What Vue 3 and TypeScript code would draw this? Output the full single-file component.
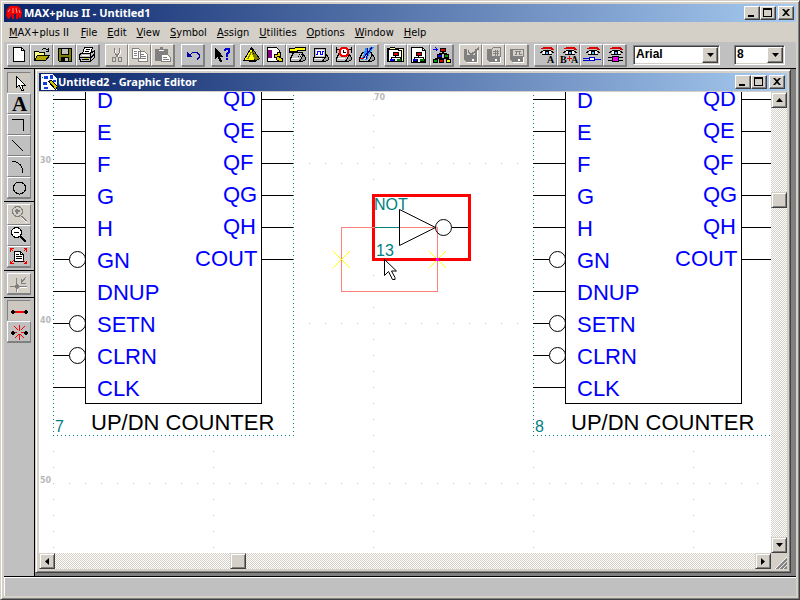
<script setup lang="ts">
import { ref } from 'vue'

type Shape = [fill: string, stroke: string, d: string]
interface Tool { id: string; label: string; disabled?: boolean }
interface Pin { name: string; y: number; inverted?: boolean }

const N = 'none'
const K = '#000'
const G = '#808080'
const W = '#fff'

const scanner: Shape[] = [
  ['#c0c0c0', K, 'M3.500 13.500l3-6h9v4l-3 5h-9v-3z'],
  ['#a0a0a0', K, 'M12.500 16.500l3-5v-3l3 4v2l-3 2z'],
  [N, W, 'M5 13.500h7'],
]

const eye: Shape[] = [
  [N, '#e00000', 'M8 2.500h9M6 3.500h12M16 4.500h3'],
  [N, K, 'M8 5.500h8M6 6.500h3M15 6.500h3M5 7.500h2M17 7.500h2M7 9.500h3M14 9.500h3'],
  [W, N, 'M8 6h8v3H8z'],
  ['#2060c0', K, 'M10.500 6.500h3v3h-3z'],
  ['#60b0ff', N, 'M11 7h2v2h-2z'],
]

const tree: Shape[] = [
  [K, N, 'M8 7h6v4H8zM10 11h1v2h-1zM6 12h10v1H6zM6 13h1v1H6zM15 13h1v1h-1zM5 14h5v3H5zM12 14h5v3h-5z'],
  ['#e00000', N, 'M9 8h4v2H9z'],
  ['#0000e0', N, 'M5 14h4v2H5z'],
  ['#008000', N, 'M12 14h4v2h-4z'],
]

const disk: Shape[] = [
  [G, G, 'M4.500 4.500h12v12h-10l-2-2z'],
  [W, N, 'M12 14h2v2h-2zM17 6h1v12H7v-1h10z'],
]

const icons: Record<string, Shape[]> = {
  new: [[W, K, 'M5.500 2.500h8l3 3v11h-11z'], [N, K, 'M13.500 2.500v3h3']],
  open: [
    ['#ffff80', K, 'M3.500 15.500v-9h4l1 1h5v3'],
    ['#b0a800', K, 'M3.500 15.500l3-5h12l-4 5z'],
    [N, K, 'M11 4.500h1M12 3.500h3M15 4.500h2M17.500 3v4M15 6.500h3'],
  ],
  save: [
    ['#808000', K, 'M4.500 3.500h13v13h-12l-1-1z'],
    ['#c0c0c0', K, 'M7.500 3.500h7v6h-7z'],
    ['#c0c0c0', K, 'M7.500 12.500h7v4h-7z'],
    [K, N, 'M8 13h3v3H8z'],
  ],
  print: [
    [W, K, 'M5.500 8.500l2-6h8l-2 6'],
    [N, K, 'M9 4.500h4M8 6.500h4'],
    ['#c0c0c0', K, 'M2.500 12.500v-3l2-1h9l4-3v7l-4 4h-10z'],
    [N, K, 'M3 12.500h11M13.500 9v7M5 14.500h7M14 12.500l4-4'],
    [W, N, 'M5 10h7v1H5z'],
    ['#d0c000', N, 'M8 13h3v1H8z'],
  ],
  cut: [
    [N, W, 'M9.500 4.500v4l4 5M14.500 4.500v4l-4 4'],
    [N, G, 'M8.500 2.500v5l4 5M13.500 2.500v5l-4 5M6.500 12.500h3v4h-3zM12.500 12.500h3v4h-3z'],
  ],
  copy: [
    [W, G, 'M3.500 3.500h6l2 2v8h-8zM9.500 6.500h6l3 3v7h-9z'],
    [N, G, 'M5 6.500h3M5 8.500h3M5 10.500h3M11 9.500h4M11 11.500h6M11 13.500h6'],
  ],
  paste: [
    [G, G, 'M3.500 4.500h12v11h-12z'],
    [W, N, 'M7 5h5v1H7z'],
    [G, N, 'M8 2h3v2H8z'],
    [W, G, 'M9.500 9.500h6l3 3v4h-9z'],
    [N, G, 'M11 12.500h4M11 14.500h6'],
  ],
  undo: [
    [N, '#0000a0', 'M8 9.500l3-2h4l2 2v3l-2 2'],
    ['#0000a0', '#0000a0', 'M5.500 7.500v4h4z'],
  ],
  help: [
    [K, K, 'M3.500 3.500v10l2-2 3 5h1l-2-5h3z'],
    [N, '#0000d0', 'M12.500 6V4.500h1v-1h4v4l-2 1v3M13.500 6V4.500h3v3l-2 1v3M14.500 13v2M15.500 13v2'],
  ],
  compile: [
    ['#808000', K, 'M10.500 2.500l8 11-5 3-11-1z'],
    ['#ffff00', K, 'M10.500 2.500l3.500 13.500-11.500-.5z'],
    [N, '#808000', 'M6 13.500h1v-2h1v-2h1v-2h2v2h1v2h1v2'],
  ],
  find: [
    [W, K, 'M3.500 2.500h9l3 3v11h-12z'],
    ['#800080', N, 'M4 5h4v8H4z'],
    ['#e8d800', K, 'M10.500 9.500h3v-2h3v4h-3l5 2v3h-3l-3-2v-2h-2z'],
  ],
  hammer: [
    ...scanner,
    [K, N, 'M2 3h6V2h11v4h-8v1H8v1H2z'],
    ['#ffff00', N, 'M3 4h5V3h10v2h-8v1H3z'],
    [K, N, 'M12 9h1v1h-1zM14 9h1v1h-1zM11 11h1v1h-1zM13 11h1v1h-1z'],
  ],
  wave: [...scanner, ['#c0c0c0', K, 'M4.500 3.500h11v9h-11z'], [W, N, 'M6 5h8v6H6z'], [N, '#0000ff', 'M6 9.500h1.500v-3h3v3h2v-3H14']],
  clock: [
    ...scanner,
    ['#f00000', N, 'M8 2h6v1h1v1h1v6h-1v1h-1v1H8v-1H7v-1H6V4h1V3h1z'],
    [W, N, 'M9 4h4v1h1v4h-1v1H9V9H8V5h1z'],
    [N, K, 'M10.500 5v2.500h2M3.500 2v6M18.500 2v6M4 4.500h2M16 4.500h2'],
  ],
  program: [...scanner, ['#2090ff', N, 'M9 3h3l-1 5-4 7H5l3-6zM14 2h4l-4 6-3 7H9l3-7z'], [N, '#000090', 'M11 3v5l-4 6M16 2l-4 6-2 6'], [N, '#e00000', 'M4 13.500h4']],
  hierarchy: [
    ['#ffffa0', K, 'M2.500 16.500v-13h2l1-1h4l1 1h8v13z'],
    [W, N, 'M4 5h12v12H4z'],
    [N, K, 'M3.500 4v12.500h13v-11h-3v-1H3.500'],
    ...tree,
  ],
  page: [[W, K, 'M3.500 2.500h11l3 3v12h-14z'], [N, K, 'M14.500 2.500v3h3'], ...tree],
  hierdown: [
    [N, '#0000ff', 'M2 4.500h5M4.500 2.500l2 2-2 2'],
    [K, N, 'M9 3h6v4H9zM11 7h2v1h-2zM8 8h8v1H8zM6 9h5v4H6zM13 9h5v4h-5zM4 13h14v1H4zM2 14h5v4H2zM8 14h5v4H8zM15 14h5v4h-5z'],
    ['#e00000', N, 'M10 4h4v2h-4zM9 15h3v2H9z'],
    ['#0000ff', N, 'M7 10h3v2H7z'],
    ['#00a000', N, 'M14 10h3v2h-3zM3 15h3v2H3z'],
    ['#ffff00', N, 'M16 15h3v2h-3z'],
  ],
  check: [...disk, ['#d4d0c8', N, 'M7 4h8v6H7z'], [N, G, 'M8 5.500l3 4 8-7M8 6.500l3 4 8-7']],
  netlist: [...disk, ['#d4d0c8', G, 'M8.500 4.500l2-2h7v9h-9z'], [N, G, 'M10 6.500h6M10 8.500h6M12.500 5v6M14.500 5v6']],
  timing: [...disk, ['#d4d0c8', G, 'M6.500 4.500h11v7h-11z'], [N, G, 'M9 6.500h6M10.500 7v2H9M13.500 7v2h2']],
  eyeA: [...eye],
  eyeBA: [...eye, [N, '#e00000', 'M9 13.500h5M11.500 11v5']],
  eyeNode: [...eye, [W, '#0000d0', 'M8.500 12.500h5v3h-5z'], [N, '#0000d0', 'M2 13.500h6M2 15.500h6M14 14.500h6']],
  eyeChip: [...eye, ['#f000f0', K, 'M8.500 11.500h6v5h-6z'], [N, K, 'M4 12.500h4M4 15.500h4M15 12.500h4M15 15.500h4']],
  select: [[W, K, 'M8.500 3.500v11l2.500-2.500 2.500 5h2l-2-5h3.500z']],
  text: [],
  ortho: [[N, K, 'M4 4.500h11.500v11']],
  line: [[N, K, 'M4.500 4.500l11 11']],
  arc: [[N, K, 'M3.500 4.500h3q8 2 8.500 11']],
  circle: [[N, K, 'M5.500 10a6 6 0 1 0 12 0a6 6 0 1 0-12 0']],
  zoomIn: [
    [N, W, 'M14 13l5 5'],
    ['#d4d0c8', G, 'M4.500 6.500a5 5 0 1 0 10 0a5 5 0 1 0-10 0M13 11l5 5M14 11l5 5M7 6.500h5M9.500 4v5M7 5.500h5M8.500 4v5'],
  ],
  zoomOut: [[W, K, 'M3.500 6.500a5 5 0 1 0 10 0a5 5 0 1 0-10 0'], [N, K, 'M6 6.500h5M12 10.500l5 5M13 10.500l5 5']],
  fit: [
    [W, K, 'M6.500 4.500h6l3 3v7h-9z'],
    [N, K, 'M8 7.500h3M8 9.500h6M8 11.500h6M12.500 4.500v3h3'],
    [N, '#f00000', 'M5.500 1.500h-3v3M2.500 1.500l3 3M15.500 1.500h3v3M18.500 1.500l-3 3M5.500 16.500h-3v-3M2.500 16.500l3-3M15.500 16.500h3v-3M18.500 16.500l-3-3'],
  ],
  node: [
    [N, G, 'M2 12.500h17M8.500 4v14M13.500 5v4h4M13.500 8.500l4-5'],
    [G, N, 'M6 12l2-2h1l2 2v1l-2 2H8l-2-2z'],
    [N, W, 'M12 13.500h7M9.500 15v3'],
  ],
  bandOn: [['#ff0000', N, 'M6 10h11v2H6z'], [K, N, 'M3 10h1V9h2v1h1v2H6v1H4v-1H3zM16 10h1V9h2v1h1v2h-1v1h-2v-1h-1z']],
  bandOff: [
    [N, '#ff0000', 'M6 10.500h3M13 10.500h4M11.500 3v6M11.500 12v6M6.500 4.500l4 4M16.500 4.500l-4 4M6.500 16.500l4-4M16.500 16.500l-4-4'],
    [K, N, 'M3 10h1V9h2v1h1v2H6v1H4v-1H3zM16 10h1V9h2v1h1v2h-1v1h-2v-1h-1z'],
  ],
}

const toolGroups: Tool[][] = [
  [{ id: 'new', label: 'New' }, { id: 'open', label: 'Open' }, { id: 'save', label: 'Save' }, { id: 'print', label: 'Print' }],
  [{ id: 'cut', label: 'Cut', disabled: true }, { id: 'copy', label: 'Copy', disabled: true }, { id: 'paste', label: 'Paste', disabled: true }],
  [{ id: 'undo', label: 'Undo' }],
  [{ id: 'help', label: 'Context help' }],
  [
    { id: 'compile', label: 'Compiler' }, { id: 'find', label: 'Search' }, { id: 'hammer', label: 'Build' },
    { id: 'wave', label: 'Simulator' }, { id: 'clock', label: 'Timing analyzer' }, { id: 'program', label: 'Programmer' },
  ],
  [{ id: 'hierarchy', label: 'Project' }, { id: 'page', label: 'Current file' }, { id: 'hierdown', label: 'Hierarchy' }],
  [{ id: 'check', label: 'Save and check', disabled: true }, { id: 'netlist', label: 'Save and compile', disabled: true }, { id: 'timing', label: 'Save and simulate', disabled: true }],
  [{ id: 'eyeA', label: 'Find text' }, { id: 'eyeBA', label: 'Replace text' }, { id: 'eyeNode', label: 'Find node' }, { id: 'eyeChip', label: 'Find symbol' }],
]

const paletteGroups: Tool[][] = [
  [
    { id: 'select', label: 'Selection' }, { id: 'text', label: 'Text' }, { id: 'ortho', label: 'Orthogonal line' },
    { id: 'line', label: 'Line' }, { id: 'arc', label: 'Arc' }, { id: 'circle', label: 'Circle' },
  ],
  [{ id: 'zoomIn', label: 'Zoom in', disabled: true }, { id: 'zoomOut', label: 'Zoom out' }, { id: 'fit', label: 'Fit in window' }],
  [{ id: 'node', label: 'Connection dot', disabled: true }],
  [{ id: 'bandOn', label: 'Rubberbanding on' }, { id: 'bandOff', label: 'Rubberbanding off' }],
]

const menus: [string, string][] = [
  ['M', 'AX+plus II'], ['F', 'ile'], ['E', 'dit'], ['V', 'iew'], ['S', 'ymbol'],
  ['A', 'ssign'], ['U', 'tilities'], ['O', 'ptions'], ['W', 'indow'], ['H', 'elp'],
]

const inputs: Pin[] = [
  { name: 'D', y: 99 }, { name: 'E', y: 131 }, { name: 'F', y: 163 }, { name: 'G', y: 195 }, { name: 'H', y: 227 },
  { name: 'GN', y: 259, inverted: true }, { name: 'DNUP', y: 291 }, { name: 'SETN', y: 323, inverted: true },
  { name: 'CLRN', y: 355, inverted: true }, { name: 'CLK', y: 387 },
]
const outputs: (Pin & { x: number })[] = [
  { name: 'QD', y: 99, x: 170 }, { name: 'QE', y: 131, x: 170 }, { name: 'QF', y: 163, x: 170 },
  { name: 'QG', y: 195, x: 170 }, { name: 'QH', y: 227, x: 170 }, { name: 'COUT', y: 259, x: 142 },
]
const counters = [{ id: 7, x: 53 }, { id: 8, x: 533 }]
const rulerRows = [{ label: '30', y: 163 }, { label: '40', y: 323 }, { label: '50', y: 483 }]
const rulerColumns = [53, 213, 373, 533, 693]

const font = ref('Arial')
const fontSize = ref('8')
const activeTools = ref(['select', 'bandOn'])
const scroll = { x: 0.256, y: 0.204 }
</script>

<template>
  <main class="frame app">
    <header class="titlebar">
      <svg class="title-icon" width="16" height="16" aria-hidden="true">
        <path fill="#f00000" d="M4 1h8l3 3 1 4-1 5h-2v-4l-1 5h-2V9H8v5H6V9l-2 4-2 1-2-4 1-6z" />
        <path fill="none" stroke="#ff9090" d="M4 4l-2 3M7 3v5M10 3l1 5M13 5l1 3" />
      </svg>
      <h1>MAX+plus II - Untitled1</h1>
      <div class="caption-buttons">
        <button type="button" aria-label="Minimize"><svg width="12" height="10"><path d="M2 7h6v2H2z" /></svg></button>
        <button type="button" aria-label="Maximize"><svg width="12" height="10"><path fill-rule="evenodd" d="M1 0h9v9H1zM2 2v6h7V2z" /></svg></button>
        <button type="button" aria-label="Close"><svg width="12" height="10"><path d="M2 1h2l2 2 2-2h2L7 4.500 10 8H8L6 6 4 8H2l3-3.500z" /></svg></button>
      </div>
    </header>

    <nav class="menubar">
      <button v-for="[key, rest] in menus" :key="key" type="button"><u>{{ key }}</u>{{ rest }}</button>
    </nav>

    <div class="toolbar">
      <div v-for="(group, i) in toolGroups" :key="i" class="tool-group" :class="{ single: group.length === 1 }">
        <button v-for="tool in group" :key="tool.id" type="button" class="tool" :disabled="tool.disabled" :aria-label="tool.label">
          <svg width="21" height="20" shape-rendering="crispEdges">
            <path v-for="([fill, stroke, d], n) in icons[tool.id]" :key="n" :fill="fill" :stroke="stroke" :d="d" />
            <text v-if="tool.id === 'eyeA'" class="glyph" x="12" y="18">A</text>
            <template v-if="tool.id === 'eyeBA'">
              <text class="glyph" x="2" y="18">B</text>
              <text class="glyph" x="13" y="18">A</text>
            </template>
          </svg>
        </button>
      </div>
      <div class="combo combo-font">
        <select v-model="font" aria-label="Font"><option>Arial</option><option>Courier New</option></select>
        <span class="drop"><svg width="7" height="4"><path d="M0 0h7L3.500 4z" /></svg></span>
      </div>
      <div class="combo combo-size">
        <select v-model="fontSize" aria-label="Text size"><option>8</option><option>10</option><option>12</option></select>
        <span class="drop"><svg width="7" height="4"><path d="M0 0h7L3.500 4z" /></svg></span>
      </div>
    </div>

    <div class="body">
      <aside class="palette">
        <div v-for="(group, i) in paletteGroups" :key="i" class="palette-group">
          <button
            v-for="tool in group" :key="tool.id" type="button" class="palette-tool"
            :class="{ pressed: activeTools.includes(tool.id) }" :disabled="tool.disabled" :aria-label="tool.label"
          >
            <svg width="22" height="19" shape-rendering="crispEdges">
              <path v-for="([fill, stroke, d], n) in icons[tool.id]" :key="n" :fill="fill" :stroke="stroke" :d="d" />
              <text v-if="tool.id === 'text'" class="glyph-large" x="4" y="17">A</text>
            </svg>
          </button>
        </div>
      </aside>

      <div class="workspace">
        <section class="frame editor">
          <header class="titlebar">
            <svg class="title-icon editor-icon" width="16" height="16" shape-rendering="crispEdges" aria-hidden="true">
              <path fill="#fff" d="M0 0h11l5 5v11H0z" />
              <path fill="#1040e0" d="M3 2h4v3H3zM9 1h3v4H9zM2 8h4v3H2zM3 13h4v2H3zM12 6h3v2h-3zM1 3h1v1H1zM8 6h1v1H8z" />
              <path fill="#d8c800" stroke="#000" d="M7.500 7.500l3-1 6 6-2 3z" />
            </svg>
            <h2>Untitled2 - Graphic Editor</h2>
            <div class="caption-buttons">
              <button type="button" aria-label="Minimize editor"><svg width="12" height="10"><path d="M2 7h6v2H2z" /></svg></button>
              <button type="button" aria-label="Maximize editor"><svg width="12" height="10"><path fill-rule="evenodd" d="M1 0h9v9H1zM2 2v6h7V2z" /></svg></button>
              <button type="button" aria-label="Close editor"><svg width="12" height="10"><path d="M2 1h2l2 2 2-2h2L7 4.500 10 8H8L6 6 4 8H2l3-3.500z" /></svg></button>
            </div>
          </header>

          <div class="view">
            <div class="canvas">
              <svg class="sheet" width="100%" height="100%">
                <g transform="translate(-39 -92)">
                  <g class="grid" shape-rendering="crispEdges">
                    <line v-for="x in rulerColumns" :key="x" :x1="x + 0.5" :x2="x + 0.5" y1="99" y2="2000" />
                    <line v-for="row in rulerRows" :key="row.y" x1="53" x2="3000" :y1="row.y + 0.5" :y2="row.y + 0.5" />
                  </g>
                  <g class="ruler">
                    <text x="374" y="100">70</text>
                    <text v-for="row in rulerRows" :key="row.y" x="40" :y="row.y">{{ row.label }}</text>
                  </g>

                  <g v-for="counter in counters" :key="counter.id" :transform="`translate(${counter.x} 0)`">
                    <rect x="1" y="0" width="239" height="435" fill="#fff" />
                    <path class="bounds" shape-rendering="crispEdges" d="M.5 91V435.500H240.500V91" />
                    <g class="ink" shape-rendering="crispEdges">
                      <path d="M32.500 80V403.500H208.500V80" />
                      <path v-for="pin in inputs" :key="pin.name" :d="`M0 ${pin.y + 0.5}H${pin.inverted ? 16 : 32}`" />
                      <path v-for="pin in outputs" :key="pin.name" :d="`M208 ${pin.y + 0.5}H240`" />
                    </g>
                    <template v-for="pin in inputs" :key="pin.name">
                      <circle v-if="pin.inverted" class="ink" cx="24.500" :cy="pin.y + 0.5" r="8" />
                      <text class="pin" x="44" :y="pin.y + 9">{{ pin.name }}</text>
                    </template>
                    <text v-for="pin in outputs" :key="pin.name" class="pin" :x="pin.x" :y="pin.y + 7">{{ pin.name }}</text>
                    <text class="caption" x="38" y="430">UP/DN COUNTER</text>
                    <text class="tag" x="2" y="432">{{ counter.id }}</text>
                  </g>

                  <g shape-rendering="crispEdges">
                    <rect class="selection" x="373.500" y="195.500" width="96" height="64" />
                    <path class="wire" d="M341.500 227.500H437.500V291.500H341.500z" />
                    <path class="lead" d="M375 227.500H399" />
                    <path class="stub" d="M333 251l17 17M333 268l17-17M429 251l17 17M429 268l17-17" />
                    <rect x="436" y="258" width="3" height="3" fill="#f0f" />
                  </g>
                  <g class="ink">
                    <path d="M399.500 209.500v36l36-18z" />
                    <circle cx="443.500" cy="227.500" r="8" />
                    <path shape-rendering="crispEdges" d="M452 227.500H468" />
                  </g>
                  <text class="tag" x="374" y="210">NOT</text>
                  <text class="tag" x="376" y="256">13</text>
                  <path class="pointer" d="M384.500 259.500v16l4-4 4 8h2.500v-2l-3.500-6.500h5z" />
                </g>
              </svg>
            </div>
            <div class="scroll scroll-y">
              <button type="button" class="thumb" aria-label="Scroll up"><svg width="7" height="4"><path d="M0 4h7L3.500 0z" /></svg></button>
              <span class="track" :style="{ flexGrow: scroll.y }" />
              <button type="button" class="thumb" aria-label="Vertical position" />
              <span class="track" :style="{ flexGrow: 1 - scroll.y }" />
              <button type="button" class="thumb" aria-label="Scroll down"><svg width="7" height="4"><path d="M0 0h7L3.500 4z" /></svg></button>
            </div>
            <div class="scroll scroll-x">
              <button type="button" class="thumb" aria-label="Scroll left"><svg width="4" height="7"><path d="M4 0v7L0 3.500z" /></svg></button>
              <span class="track" :style="{ flexGrow: scroll.x }" />
              <button type="button" class="thumb" aria-label="Horizontal position" />
              <span class="track" :style="{ flexGrow: 1 - scroll.x }" />
              <button type="button" class="thumb" aria-label="Scroll right"><svg width="4" height="7"><path d="M0 0v7L4 3.500z" /></svg></button>
            </div>
            <svg class="grip" width="16" height="16" aria-hidden="true">
              <path stroke="#fff" d="M4 16L16 4M8 16L16 8M12 16l4-4" />
              <path stroke="#808080" stroke-width="2" d="M5.500 16.500l11-11M9.500 16.500l7-7M13.500 16.500l3-3" />
            </svg>
          </div>
        </section>
      </div>
    </div>

    <footer class="statusbar" />
  </main>
</template>

<style>
body {
  margin: 0;
  background: #d4d0c8;
}
</style>

<style scoped>
* {
  box-sizing: border-box;
}

button {
  margin: 0;
  padding: 0;
  border: 0;
  background: none;
  color: #000;
  font: inherit;
}

svg {
  display: block;
}

.frame {
  display: flex;
  flex-direction: column;
  padding: 3px;
  border: 1px solid;
  border-color: #d4d0c8 #404040 #404040 #d4d0c8;
  background: #d4d0c8;
  box-shadow: inset 1px 1px #fff, inset -1px -1px #808080;
}

.app {
  min-height: 100vh;
  font: 11px/14px "DejaVu Sans Condensed", "DejaVu Sans", sans-serif;
}

.titlebar {
  display: flex;
  flex: none;
  align-items: center;
  height: 18px;
  padding: 0 2px;
  background: linear-gradient(to right, #0a246a, #a6caf0);
}

.title-icon {
  flex: none;
  margin-right: 2px;
}

.editor-icon {
  margin-right: 1px;
}

.titlebar h1,
.titlebar h2 {
  flex: 1;
  margin: 0;
  color: #fff;
  font: bold 11px/16px "Noto Sans", "Open Sans", sans-serif;
  white-space: nowrap;
}

.caption-buttons {
  display: flex;
}

.caption-buttons button {
  width: 16px;
  height: 14px;
  padding: 1px;
  border: 1px solid;
  border-color: #fff #404040 #404040 #fff;
  background: #d4d0c8;
  box-shadow: inset -1px -1px #808080;
}

.caption-buttons button:last-child {
  margin-left: 2px;
}

.menubar {
  display: flex;
  height: 20px;
}

.menubar button {
  padding: 1px 5px 0;
  white-space: nowrap;
}

.menubar button:first-child {
  margin-right: 2px;
}

.toolbar {
  display: flex;
  align-items: center;
  gap: 6px;
  height: 27px;
  padding: 0 3px;
  border-bottom: 1px solid #000;
  background: #c0c0c0;
}

.tool-group {
  display: flex;
  flex: none;
  box-shadow: 1px 1px #808080;
}

.tool-group.single {
  margin-left: 1px;
}

.tool {
  width: 23px;
  height: 22px;
  border: 1px solid;
  border-color: #fff #808080 #808080 #fff;
  background: #c0c0c0;
}

.tool svg,
.palette-tool svg {
  overflow: visible;
}

.tool:disabled,
.palette-tool:disabled {
  background: #d4d0c8;
}

.glyph {
  font: bold 10px "Liberation Serif", serif;
}

.glyph-large {
  font: bold 21px "Liberation Serif", serif;
}

.combo {
  display: grid;
  height: 20px;
  border: 1px solid;
  border-color: #808080 #fff #fff #808080;
  background: #fff;
  box-shadow: inset 1px 1px #404040, inset -1px -1px #d4d0c8;
}

.combo-font {
  width: 87px;
  margin-left: 1px;
}

.combo-size {
  width: 51px;
  margin-left: 8px;
}

.combo select,
.drop {
  grid-area: 1 / 1;
}

.combo select {
  width: 100%;
  height: 18px;
  margin: 0;
  padding: 0 18px 2px 2px;
  border: 0;
  appearance: none;
  background: none;
  color: #000;
  font: bold 12px/16px "Liberation Sans", sans-serif;
}

.drop {
  display: grid;
  place-items: center;
  justify-self: end;
  width: 16px;
  height: 16px;
  margin: 1px;
  border: 1px solid;
  border-color: #fff #404040 #404040 #fff;
  background: #d4d0c8;
  box-shadow: inset -1px -1px #808080;
  pointer-events: none;
}

.body {
  display: flex;
  flex: 1;
  min-height: 0;
}

.palette {
  flex: none;
  width: 31px;
  padding-top: 1px;
  border-right: 1px solid #000;
  background: #c0c0c0;
}

.palette-group {
  display: grid;
  padding: 2px 3px 3px;
  border-bottom: 1px solid #000;
}

.palette-group:last-child {
  border-bottom: 0;
}

.palette-tool {
  height: 21px;
  border: 1px solid;
  border-color: #fff #808080 #808080 #fff;
  box-shadow: 0 1px #808080;
}

.palette-tool.pressed {
  border-color: #808080 #c0c0c0 #c0c0c0 #808080;
  background: #ccc8c0;
}

.workspace {
  display: flex;
  flex: 1;
  min-width: 0;
  padding: 0 5px 3px 0;
  background: #808080;
}

.editor {
  flex: 1;
  min-width: 0;
}

.view {
  display: grid;
  flex: 1;
  grid-template-rows: minmax(0, 1fr) 16px;
  grid-template-columns: minmax(0, 1fr) 16px;
  margin-top: 1px;
}

.canvas {
  display: grid;
  min-height: 200px;
  overflow: hidden;
  background: #fff;
}

.sheet {
  overflow: hidden;
  font-family: "Liberation Sans", Arial, sans-serif;
}

.grid {
  stroke: #c0c0c0;
  stroke-dasharray: 1 15;
}

.ruler {
  fill: #b8b8b8;
  font: bold 8px "DejaVu Sans", sans-serif;
}

.bounds {
  fill: none;
  stroke: #008080;
  stroke-dasharray: 1 3;
}

.ink {
  fill: none;
  stroke: #000;
}

.pin {
  fill: #0000ff;
  font-size: 22px;
}

.caption {
  fill: #000;
  font-size: 22px;
}

.tag {
  fill: #008080;
  font-size: 16px;
}

.selection {
  fill: none;
  stroke: #ff0000;
  stroke-width: 3;
}

.wire {
  fill: none;
  stroke: #ff8080;
}

.lead {
  stroke: #008080;
}

.stub {
  stroke: #ffff00;
}

.pointer {
  fill: #fff;
  stroke: #000;
}

.scroll {
  display: flex;
  background: conic-gradient(#fff 25%, #d4d0c8 0 50%, #fff 0 75%, #d4d0c8 0) 0 0 / 2px 2px;
}

.scroll-y {
  flex-direction: column;
}

.track {
  flex-basis: 0;
}

.thumb {
  display: grid;
  flex: none;
  place-items: center;
  width: 16px;
  height: 16px;
  border: 1px solid;
  border-color: #d4d0c8 #404040 #404040 #d4d0c8;
  background: #d4d0c8;
  box-shadow: inset 1px 1px #fff, inset -1px -1px #808080;
}

.grip {
  fill: none;
}

.statusbar {
  height: 20px;
  border-top: 1px solid #000;
  background: #c0c0c0;
  box-shadow: inset 1px 1px #fff;
}
</style>
